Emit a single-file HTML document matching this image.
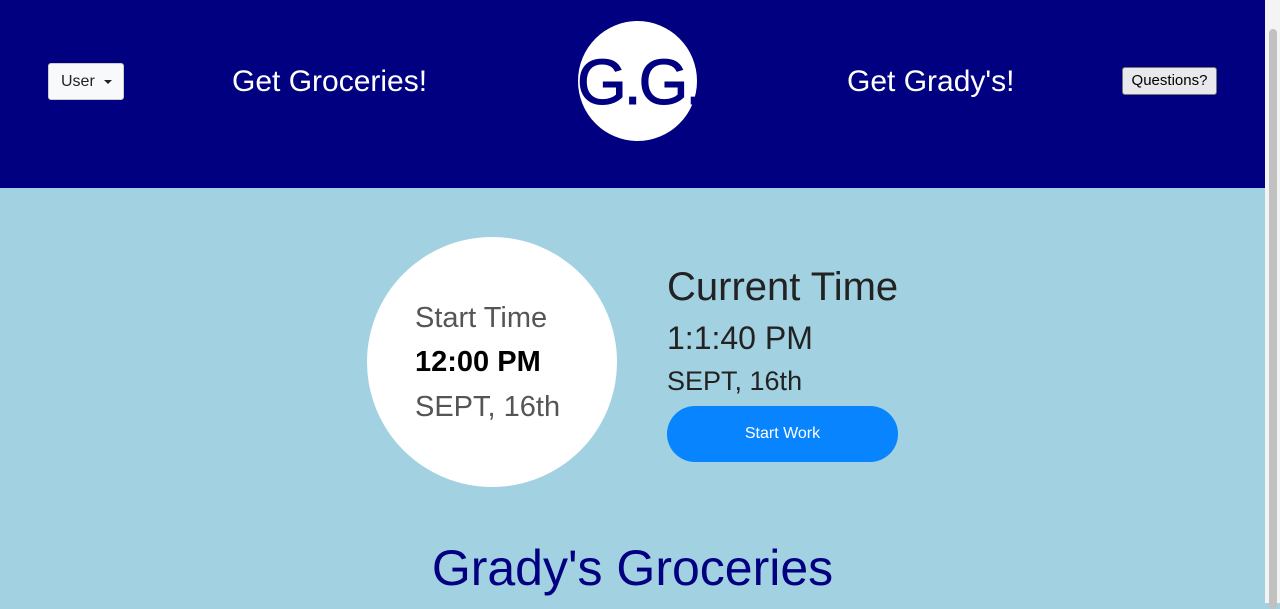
<!DOCTYPE html>
<html><head><style>
body{margin:0;width:1280px;height:603px;overflow:hidden;font-family:"Liberation Sans",Arial,sans-serif;background:#a2d1e1;position:relative}
.hdr{position:absolute;left:0;top:0;width:1265px;height:188px;background:#000080}
.sb{position:absolute;left:1265px;top:0;width:15px;height:603px;background:#f4f4f4}
.thumb{position:absolute;left:1269px;top:29px;width:8px;height:580px;background:#c1c1c1;border-radius:4px}
.user{position:absolute;left:48px;top:63px;width:76px;height:37px;background:#f8f9fa;border:1px solid #ccc;border-radius:3px;box-sizing:border-box;font-size:16px;color:#222;line-height:35px;padding-left:12px}
.user:after{content:"";position:absolute;left:55px;top:16px;border:4px solid transparent;border-top:4px solid #222;border-bottom:0}
.t{position:absolute;color:#fff;font-size:30px;top:65px}
.logo{position:absolute;left:578px;top:21px;width:119px;height:120px;border-radius:50%;background:#fff;overflow:visible}
.logo span{position:absolute;left:-1px;top:28px;font-size:64px;color:#000080;letter-spacing:-3px;line-height:66px;white-space:nowrap;-webkit-text-stroke:1px #000080}
.q{position:absolute;left:1122px;top:67px;width:95px;height:28px;background:#e9e9ed;border:1px solid #767676;border-radius:3px;box-sizing:border-box;font-size:15px;line-height:26px;text-align:center;color:#000}
.circ{position:absolute;left:367px;top:237px;width:250px;height:250px;border-radius:50%;background:#fff}
.c1{position:absolute;left:415px;font-size:29px;color:#555}
.right{position:absolute;left:667px;color:#222}
.btn{position:absolute;left:667px;top:406px;width:231px;height:56px;border-radius:28px;background:#0884ff;color:#fff;font-size:16px;text-align:center;line-height:56px}
.gg{position:absolute;left:0;width:1265px;text-align:center;top:539px;font-size:50px;color:#000080}
</style></head><body>
<div class="hdr">
<div class="user">User</div>
<div class="t" style="left:232px">Get Groceries!</div>
<div class="logo"><span>G.G.</span></div>
<div class="t" style="left:847px">Get Grady's!</div>
<div class="q">Questions?</div>
</div>
<div class="sb"></div><div class="thumb"></div>
<div class="circ"></div>
<div class="c1" style="top:302px">Start Time</div>
<div class="c1" style="top:346px;color:#000;font-weight:bold">12:00 PM</div>
<div class="c1" style="top:391px">SEPT, 16th</div>
<div class="right" style="top:265px;font-size:40px">Current Time</div>
<div class="right" style="top:320px;font-size:32px">1:1:40 PM</div>
<div class="right" style="top:366px;font-size:27px">SEPT, 16th</div>
<div class="btn">Start Work</div>
<div class="gg">Grady's Groceries</div>
</body></html>
